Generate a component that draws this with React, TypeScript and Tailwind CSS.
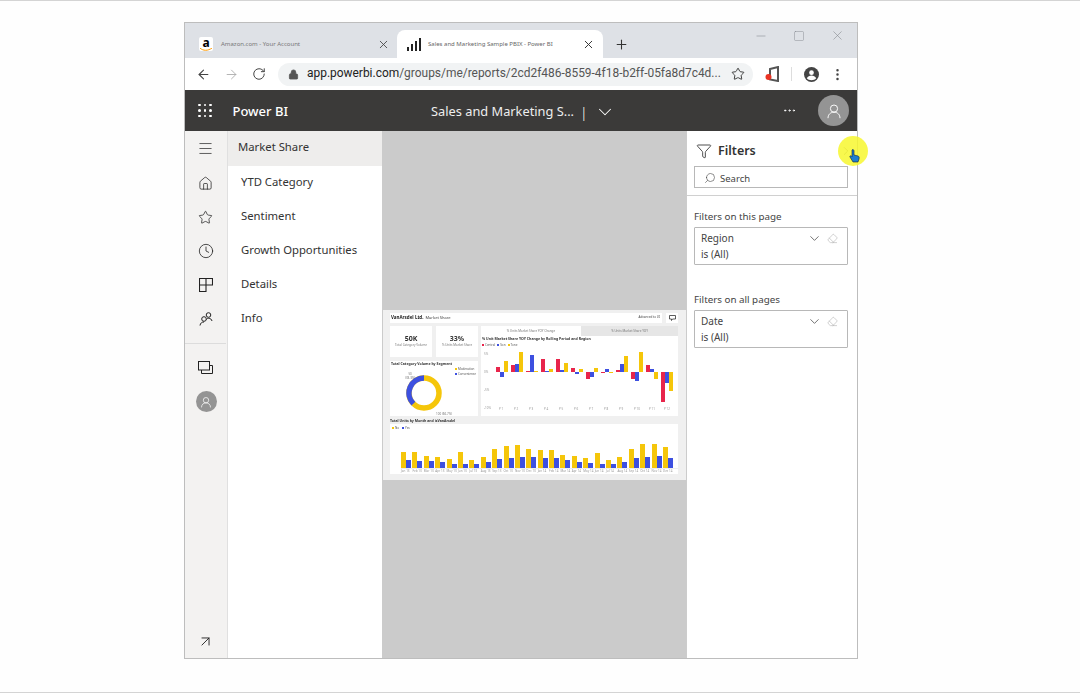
import { ArrowLeft, ArrowRight, ArrowUpRight, ChevronDown, ChevronRight, Clock, Eraser, Ellipsis, EllipsisVertical, Filter, Home, Lock, Menu, Minus, Plus, RotateCw, Search, Square, Star, X } from "lucide-react";

const pages = ["YTD Category", "Sentiment", "Growth Opportunities", "Details", "Info"];

const trend = [
  [5, -5, 11],
  [7, 8, 20],
  [1, 17, 1],
  [13, 1, 3],
  [13, 2, 9],
  [4, -2, 3],
  [-7, -5, 4],
  [-1, 3, -1],
  [2, 8, 16],
  [-7, -9, 20],
  [7, 3, -7],
  [-30, -11, -19],
];

const units = [
  [16, 8], [16, 7], [12, 7], [11, 6], [9, 4], [16, 4], [8, 4], [11, 6], [19, 9], [22, 10], [23, 11], [19, 11],
  [18, 10], [18, 10], [13, 8], [12, 6], [10, 5], [15, 4], [8, 4], [11, 6], [19, 10], [24, 11], [24, 12], [21, 10],
];

const months = ["Jan", "Feb", "Mar", "Apr", "May", "Jun", "Jul", "Aug", "Sep", "Oct", "Nov", "Dec"];

function PersonIcon({ size }: { size: number }) {
  return (
    <svg width={size} height={size} viewBox="0 0 20 20" fill="none" stroke="white" strokeWidth="1.2">
      <circle cx="10" cy="7" r="4.5" />
      <path d="M2.5 19c0-4.5 3-7.500 7.500-7.500s7.500 3 7.500 7.500" />
    </svg>
  );
}

function TrendGroup({ values }: { values: number[] }) {
  const colors = ["bg-[#e8254b]", "bg-[#3d50e0]", "bg-[#f5c60a]"];
  return (
    <div className="flex w-[15px] flex-col">
      <div className="flex h-[21px] items-end">
        {values.map((v, i) => (
          <div key={i} className={`w-[4px] ${colors[i]}`} style={{ height: v > 0 ? v : 0 }} />
        ))}
      </div>
      <div className="flex h-[35px] items-start">
        {values.map((v, i) => (
          <div key={i} className={`w-[4px] ${colors[i]}`} style={{ height: v < 0 ? -v : 0 }} />
        ))}
      </div>
    </div>
  );
}

function FilterCard({ title }: { title: string }) {
  return (
    <div className="ml-[7px] mr-[9px] h-[38px] rounded-[1px] border border-[#b8b8b8] pl-[6px] pr-[9px] pt-[2px] text-[10px] leading-[16px] text-[#444]">
      <div className="flex items-center justify-between">
        <span>{title}</span>
        <span className="flex items-center gap-[5px]">
          <ChevronDown size={15} strokeWidth={1.2} className="text-[#444]" />
          <Eraser size={11} strokeWidth={1} className="text-[#999]" />
        </span>
      </div>
      <div>is (All)</div>
    </div>
  );
}

function RailIcon({ children }: { children: React.ReactNode }) {
  return <div className="flex h-[34px] items-center justify-center text-[#222]">{children}</div>;
}

export default function App() {
  return (
    <div className="h-[693px] w-[1080px] overflow-hidden border-y border-[#d4d4d4] bg-[#fefefe] pl-[184px] pt-[21px] font-['Noto_Sans',sans-serif]">
      <div className="relative flex h-[637px] w-[674px] flex-col border border-[#bdbdbd] bg-white">
        {/* tab strip */}
        <div className="flex h-[35px] items-end bg-[#dee1e6] pl-[4px]">
          <div className="flex h-[28px] w-[208px] shrink-0 items-center pl-[10px] pr-[7px]">
            <div className="relative mr-[8px] flex h-[14px] w-[14px] flex-col items-center rounded-[2px] bg-white">
              <span className="text-[12px] font-bold leading-[11px] text-black">a</span>
              <svg width="12" height="3" viewBox="0 0 12 3" className="absolute bottom-0 left-px">
                <path d="M0 0c3 3 8 3 12 0" stroke="#f90" strokeWidth="1" fill="none" />
              </svg>
            </div>
            <span className="flex-1 text-[6px] text-[#777]">Amazon.com - Your Account</span>
            <X size={13} strokeWidth={1.6} className="text-[#444]" />
          </div>
          <div className="flex h-[28px] w-[206px] shrink-0 items-center rounded-t-[8px] bg-white pl-[10px] pr-[8px]">
            <svg width="14" height="13" viewBox="0 0 14 13" fill="#222" className="mr-[7px]">
              <rect x="0" y="9" width="2" height="4" />
              <rect x="4" y="6" width="2" height="7" />
              <rect x="8" y="3" width="2" height="10" />
              <rect x="12" y="0" width="2" height="13" />
            </svg>
            <span className="flex-1 text-[6px] text-[#666]">Sales and Marketing Sample PBIX - Power BI</span>
            <X size={13} strokeWidth={1.8} className="text-[#333]" />
          </div>
          <Plus size={15} strokeWidth={1.7} className="mb-[6px] ml-[11px] text-[#333]" />
          <div className="mb-[15px] ml-auto mr-[12px] flex items-center gap-[25px] text-[#80848a]">
            <Minus size={14} strokeWidth={0.9} />
            <Square size={12} strokeWidth={0.9} />
            <X size={15} strokeWidth={0.9} />
          </div>
        </div>
        {/* address bar */}
        <div className="flex h-[32px] items-center bg-white pl-[11px]">
          <ArrowLeft size={15} strokeWidth={1.7} className="shrink-0 text-[#444]" />
          <ArrowRight size={15} strokeWidth={1.4} className="ml-[13px] shrink-0 text-[#aaa]" />
          <RotateCw size={14} strokeWidth={1.7} className="ml-[13px] shrink-0 text-[#444]" />
          <div className="ml-[12px] flex h-[23px] w-[475px] shrink-0 items-center rounded-full bg-[#f1f3f4] pl-[10px] pr-[8px]">
            <Lock size={11} fill="#555" strokeWidth={1.6} className="shrink-0 text-[#555]" />
            <span className="ml-[8px] min-w-0 flex-1 whitespace-nowrap font-['Roboto',sans-serif] text-[11.950px] text-[#555]">
              <span className="text-[#222]">app.powerbi.com</span>/groups/me/reports/2cd2f486-8559-4f18-b2ff-05fa8d7c4d...
            </span>
            <Star size={14} strokeWidth={1.6} className="shrink-0 text-[#333]" />
          </div>
          <svg width="14" height="16" viewBox="0 0 14 16" className="ml-[12px] shrink-0">
            <path d="M5 3l8-2v14l-8-1.500z" fill="none" stroke="#555" strokeWidth="2" />
            <circle cx="3.500" cy="11" r="3" fill="#ea3323" />
          </svg>
          <div className="ml-[12px] h-[14px] w-px shrink-0 bg-[#ddd]" />
          <svg width="15" height="15" viewBox="0 0 16 16" className="ml-[12px] shrink-0">
            <circle cx="8" cy="8" r="8" fill="#444" />
            <circle cx="8" cy="6" r="2.500" fill="white" />
            <path d="M3 12c1-2 3-3 5-3s4 1 5 3c-1.300 1.500-3 2-5 2s-3.700-.5-5-2z" fill="white" />
          </svg>
          <EllipsisVertical size={15} strokeWidth={2} className="ml-[11px] shrink-0 text-[#444]" />
        </div>
        {/* power bi header */}
        <div className="relative flex h-[41px] items-center bg-[#3b3a39] pl-[13px] pr-[8px] text-white">
          <div className="grid grid-cols-3 gap-[3px]">
            {Array.from({ length: 9 }).map((_, i) => (
              <div key={i} className="h-[2.500px] w-[2.500px] rounded-full bg-white" />
            ))}
          </div>
          <span className="ml-[21px] mt-[2px] text-[13px] font-medium">Power BI</span>
          <span className="ml-[143px] mt-[3px] text-[12.800px] text-[#eee]">Sales and Marketing S...</span>
          <span className="ml-[6px] mt-[3px] text-[14px] font-light">|</span>
          <ChevronDown size={22} strokeWidth={1.1} className="ml-[6px] mt-[2px]" />
          <Ellipsis size={15} strokeWidth={1.4} className="ml-auto mr-[21px]" />
          <div className="flex h-[31px] w-[31px] items-center justify-center rounded-full bg-[#949494]">
            <PersonIcon size={16} />
          </div>
        </div>
        {/* body */}
        <div className="flex min-h-0 flex-1">
          {/* rail */}
          <div className="flex w-[43px] flex-col border-r border-[#e0e0e0] bg-[#f3f2f1] pr-px">
            <div className="flex h-[35px] items-center justify-center text-[#222]">
              <Menu size={17} strokeWidth={1} />
            </div>
            <RailIcon><Home size={15} strokeWidth={1.2} /></RailIcon>
            <RailIcon><Star size={15} strokeWidth={1.2} /></RailIcon>
            <RailIcon><Clock size={16} strokeWidth={1.2} /></RailIcon>
            <RailIcon>
              <svg width="14" height="14" viewBox="0 0 14 14" fill="none" stroke="#222" strokeWidth="1.1">
                <path d="M.5 .5h13v6.500h-6.500v6.500h-6.500zM7 .5v6.500h-6.500" />
              </svg>
            </RailIcon>
            <RailIcon>
              <svg width="14" height="14" viewBox="0 0 14 14" fill="none" stroke="#222" strokeWidth="1">
                <circle cx="9.500" cy="3" r="2.300" />
                <path d="M7.500 7.500c.5-1 1-1.200 2-1.200 2 0 3 1 3.500 2.700" />
                <circle cx="5" cy="7" r="2.300" />
                <path d="M1 13.500c.3-2.500 2-3.500 4-3.500" />
              </svg>
            </RailIcon>
            <div className="mt-[7px] border-t border-[#dcdcdc] pt-[7px]">
              <div className="flex h-[32px] items-center justify-center">
                <svg width="15" height="13" viewBox="0 0 15 13" fill="none" stroke="#222" strokeWidth="1">
                  <rect x=".5" y=".5" width="11" height="8.500" />
                  <path d="M3.500 9v3.500h11v-8h-3" />
                </svg>
              </div>
              <div className="ml-px mt-[8px] flex justify-center">
                <div className="flex h-[21px] w-[21px] items-center justify-center rounded-full bg-[#949494]">
                  <PersonIcon size={12} />
                </div>
              </div>
            </div>
            <div className="mb-[8px] mt-auto flex justify-center text-[#222]">
              <ArrowUpRight size={17} strokeWidth={1.3} />
            </div>
          </div>
          {/* page list */}
          <div className="w-[154px] bg-white text-[11.300px] text-[#333]">
            <div className="flex h-[35px] items-center bg-[#eeedec] pb-[3px] pl-[10px]">Market Share</div>
            {pages.map((p) => (
              <div key={p} className="flex h-[34.200px] items-center pb-[2px] pl-[13px]">
                {p}
              </div>
            ))}
          </div>
          {/* canvas */}
          <div className="flex w-[304px] items-center bg-[#cbcbcb] pl-px">
            <div className="flex h-[170px] w-[303px] flex-col bg-[#f0f0f0] pl-[7px] pr-[8px] pt-[3px] blur-[0.35px]">
              <div className="flex h-[10px] gap-[4px]">
                <div className="flex flex-1 items-center bg-white pl-px text-[4px] text-[#444]">
                  <span className="mr-[2px] text-[4.500px] font-bold text-[#222]">VanArsdel Ltd.</span> Market Share
                  <span className="ml-auto mr-[2px] text-[3px]">Advanced to UI</span>
                </div>
                <div className="flex w-[12px] items-center justify-center bg-white">
                  <svg width="7" height="6" viewBox="0 0 7 6" fill="none" stroke="#333" strokeWidth=".8">
                    <path d="M.5 .5h6v3.500h-3l-1 1.500v-1.500h-2z" />
                  </svg>
                </div>
              </div>
              <div className="mt-[3px] flex h-[90px] gap-[3px]">
                <div className="flex w-[88px] flex-col">
                  <div className="flex h-[31px] gap-[4px]">
                    <div className="flex w-[42px] flex-col items-center justify-center bg-white">
                      <span className="text-[7px] font-bold leading-[8px] text-[#333]">50K</span>
                      <span className="text-[3px] leading-[4px] text-[#777]">Total Category Volume</span>
                    </div>
                    <div className="flex w-[42px] flex-col items-center justify-center bg-white">
                      <span className="text-[7px] font-bold leading-[8px] text-[#333]">33%</span>
                      <span className="text-[3px] leading-[4px] text-[#777]">% Units Market Share</span>
                    </div>
                  </div>
                  <div className="relative mt-[4px] flex-1 bg-white pl-px">
                    <div className="text-[3.500px] font-bold leading-[6px] text-[#333]">Total Category Volume by Segment</div>
                    <div className="ml-[15px] mt-[8px] w-[36px]">
                      <svg width="36" height="36" viewBox="0 0 36 36">
                        <circle cx="18" cy="18" r="15" fill="none" stroke="#f5c60a" strokeWidth="5.500" />
                        <path d="M18 3A15 15 0 0 0 7.400 28.600" fill="none" stroke="#3d50e0" strokeWidth="5.500" />
                      </svg>
                    </div>
                    <div className="absolute left-[15px] top-[11px] text-center text-[3px] leading-[4px] text-[#777]">
                      <div>50</div>
                      <div>(33.3%)</div>
                    </div>
                    <div className="absolute bottom-0 left-[46px] text-[3px] leading-[4px] text-[#777]">100 (66.7%)</div>
                    <div className="absolute right-[2px] top-[6px] text-[3px] leading-[5px] text-[#555]">
                      <div><span className="mr-px inline-block h-[2px] w-[2px] bg-[#f5c60a]" />Moderation</div>
                      <div><span className="mr-px inline-block h-[2px] w-[2px] bg-[#3d50e0]" />Convenience</div>
                    </div>
                  </div>
                </div>
                <div className="flex flex-1 flex-col">
                  <div className="flex h-[10px] text-center text-[3px] leading-[10px] text-[#777]">
                    <div className="w-[100px] bg-white">% Units Market Share YOY Change</div>
                    <div className="flex-1 bg-[#e6e6e6]">% Units Market Share YOY</div>
                  </div>
                  <div className="flex-1 bg-white pl-px">
                    <div className="text-[3.500px] font-bold leading-[5px] text-[#333]">% Unit Market Share YOY Change by Rolling Period and Region</div>
                    <div className="mt-[2px] flex items-center gap-[2px] text-[3px] leading-[4px] text-[#555]">
                      <span><span className="mr-px inline-block h-[2px] w-[2px] bg-[#e8254b]" />Central</span>
                      <span><span className="mr-px inline-block h-[2px] w-[2px] bg-[#3d50e0]" />Son</span>
                      <span><span className="mr-px inline-block h-[2px] w-[2px] bg-[#f5c60a]" />Tone</span>
                    </div>
                    <div className="mt-[4px] flex">
                      <div className="flex w-[14px] flex-col gap-[12px] pl-[2px] text-[3px] text-[#999]">
                        <span className="leading-[6px]">5%</span>
                        <span className="leading-[6px]">0%</span>
                        <span className="leading-[6px]">-5%</span>
                        <span className="leading-[6px]">-10%</span>
                      </div>
                      <div>
                        <div className="flex">
                          {trend.map((values, i) => (
                            <TrendGroup key={i} values={values} />
                          ))}
                        </div>
                        <div className="flex text-[3px] leading-[5px] text-[#999]">
                          {trend.map((_, i) => (
                            <span key={i} className="w-[15px] pl-[3px]">P {i + 1}</span>
                          ))}
                        </div>
                      </div>
                    </div>
                  </div>
                </div>
              </div>
              <div className="mt-[2px] text-[3.500px] font-bold leading-[6px] text-[#333]">Total Units by Month and isVanArsdel</div>
              <div className="h-[50px] bg-white pl-[2px] pt-[2px]">
                <div className="flex gap-[3px] text-[3px] leading-[4px] text-[#555]">
                  <span><span className="mr-px inline-block h-[2px] w-[2px] bg-[#f5c60a]" />No</span>
                  <span><span className="mr-px inline-block h-[2px] w-[2px] bg-[#3d50e0]" />Yes</span>
                </div>
                <div className="ml-[9px] mt-[3px] flex h-[36px] items-end gap-[1.400px] border-b border-[#eee]">
                  {units.map(([a, b], i) => (
                    <div key={i} className="flex items-end">
                      <div className="w-[5px] bg-[#f5c60a]" style={{ height: a }} />
                      <div className="w-[5px] bg-[#3d50e0]" style={{ height: b }} />
                    </div>
                  ))}
                </div>
                <div className="ml-[9px] flex text-[3px] leading-[5px] text-[#999]">
                  {units.map((_, i) => (
                    <span key={i} className="w-[11.400px] whitespace-nowrap">
                      {months[i % 12]} {i < 12 ? 13 : 14}
                    </span>
                  ))}
                </div>
              </div>
            </div>
          </div>
          {/* filters */}
          <div className="flex-1 border-l border-[#ccc] bg-white">
            <div className="flex h-[35px] items-center pl-[9px] pr-[4px] pt-[5px]">
              <Filter size={16} strokeWidth={1.3} className="text-[#333]" />
              <span className="ml-[6px] text-[12.500px] font-semibold text-[#333]">Filters</span>
              <ChevronRight size={14} strokeWidth={1} className="ml-auto text-[#555]" />
            </div>
            <div className="ml-[7px] mr-[9px] flex h-[22px] items-center border border-[#b8b8b8] pl-[9px] pt-[4px] text-[9.500px] text-[#444]">
              <Search size={12} strokeWidth={1.2} className="-mt-[3px] -scale-x-100" />
              <span className="ml-[4px]">Search</span>
            </div>
            <div className="mt-[7px] border-t border-[#d0d0d0] pt-[13px]">
              <div className="mb-[3px] pl-[7px] text-[9.800px] leading-[15px] text-[#444]">Filters on this page</div>
              <FilterCard title="Region" />
              <div className="mb-[3px] mt-[27px] pl-[7px] text-[9.800px] leading-[15px] text-[#444]">Filters on all pages</div>
              <FilterCard title="Date" />
            </div>
          </div>
        </div>
        {/* cursor highlight */}
        <div className="absolute left-[653px] top-[113px] flex h-[30px] w-[30px] items-center justify-center rounded-full bg-[#f7f72f]/85">
          <svg width="11" height="14" viewBox="0 0 11 14" className="ml-[3px] mt-[10px]">
            <path d="M3 1c1-1 2 0 2 1v4l4 1c1 .5 1.500 1 1 3l-1 3H4L1 8c-.5-1 .5-1.500 1.500-1L3 7.500z" fill="#1e7fd0" stroke="#123" strokeWidth=".6" />
          </svg>
        </div>
      </div>
    </div>
  );
}
